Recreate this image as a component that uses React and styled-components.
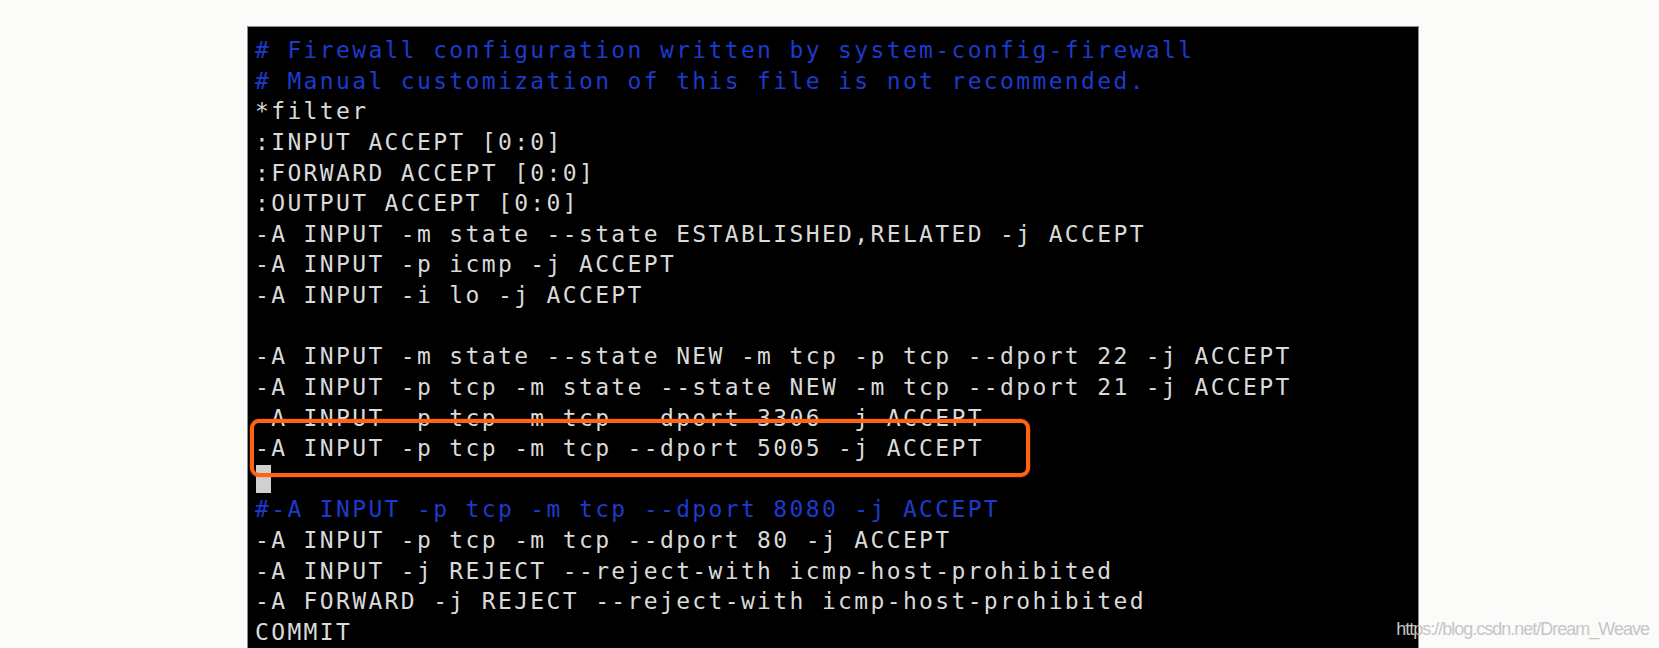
import React from 'react';
import styled, { createGlobalStyle } from 'styled-components';

const GlobalStyle = createGlobalStyle`
  html, body {
    margin: 0;
    padding: 0;
    background: #fbfbf9;
    overflow: hidden;
  }
`;

const Page = styled.div`
  position: relative;
  box-sizing: border-box;
  width: 1659px;
  height: 648px;
  padding: 26px 0 0 247px;
  overflow: hidden;
`;

const Terminal = styled.div`
  position: relative;
  box-sizing: border-box;
  width: 1172px;
  padding: 8px 0 0 7px;
  background: #000;
  border: 1px solid #8c8c8c;
  border-bottom: none;
  font-family: 'DejaVu Sans Mono', 'Liberation Mono', monospace;
  font-size: 23px;
  letter-spacing: 2.35px;
  line-height: 30.63px;
`;

const Row = styled.div`
  height: 30.63px;
  white-space: pre;
  color: ${(props) => (props.$tone === 'comment' ? '#1d3acd' : '#dadad8')};
`;

const Cursor = styled.span`
  display: inline-block;
  vertical-align: top;
  width: 15px;
  height: 28px;
  margin: 1px 0 0 1px;
  background: #d0d0ce;
`;

const Highlight = styled.div`
  position: absolute;
  box-sizing: border-box;
  left: 2px;
  top: 392px;
  width: 780px;
  height: 58px;
  border: 4px solid #ff6416;
  border-radius: 9px;
  box-shadow: 0 0 2px rgba(255, 100, 22, 0.6);
`;

const Watermark = styled.div`
  position: absolute;
  right: 10px;
  bottom: 10px;
  font-family: 'Liberation Sans', Arial, sans-serif;
  font-size: 18px;
  line-height: 18px;
  letter-spacing: -1px;
  color: #c6c6c6;
`;

const lines = [
  { text: '# Firewall configuration written by system-config-firewall', tone: 'comment' },
  { text: '# Manual customization of this file is not recommended.', tone: 'comment' },
  { text: '*filter' },
  { text: ':INPUT ACCEPT [0:0]' },
  { text: ':FORWARD ACCEPT [0:0]' },
  { text: ':OUTPUT ACCEPT [0:0]' },
  { text: '-A INPUT -m state --state ESTABLISHED,RELATED -j ACCEPT' },
  { text: '-A INPUT -p icmp -j ACCEPT' },
  { text: '-A INPUT -i lo -j ACCEPT' },
  { text: '' },
  { text: '-A INPUT -m state --state NEW -m tcp -p tcp --dport 22 -j ACCEPT' },
  { text: '-A INPUT -p tcp -m state --state NEW -m tcp --dport 21 -j ACCEPT' },
  { text: '-A INPUT -p tcp -m tcp --dport 3306 -j ACCEPT' },
  { text: '-A INPUT -p tcp -m tcp --dport 5005 -j ACCEPT' },
  { cursor: true },
  { text: '#-A INPUT -p tcp -m tcp --dport 8080 -j ACCEPT', tone: 'comment' },
  { text: '-A INPUT -p tcp -m tcp --dport 80 -j ACCEPT' },
  { text: '-A INPUT -j REJECT --reject-with icmp-host-prohibited' },
  { text: '-A FORWARD -j REJECT --reject-with icmp-host-prohibited' },
  { text: 'COMMIT' },
];

export default function App() {
  return (
    <>
      <GlobalStyle />
      <Page>
        <Terminal>
          {lines.map((line, i) => (
            <Row key={i} $tone={line.tone}>
              {line.cursor ? <Cursor /> : line.text}
            </Row>
          ))}
          <Highlight />
        </Terminal>
        <Watermark>https://blog.csdn.net/Dream_Weave</Watermark>
      </Page>
    </>
  );
}
